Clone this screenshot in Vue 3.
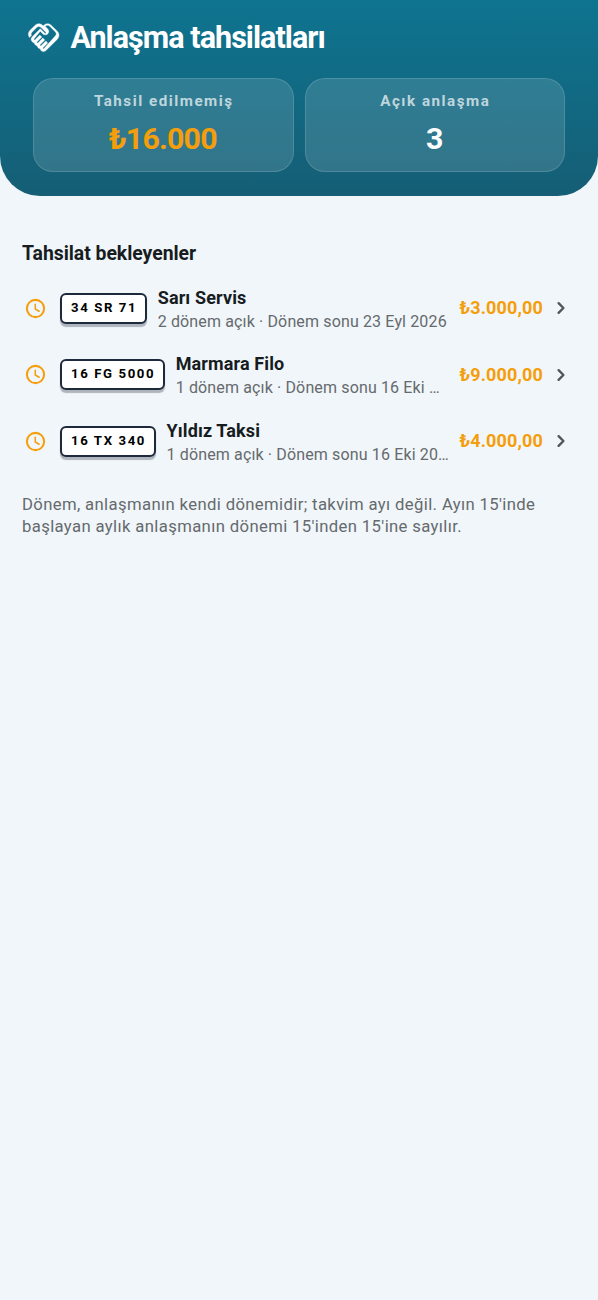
<script setup>
const stats = [
  { label: 'Tahsil edilmemiş', value: '₺16.000', accent: true },
  { label: 'Açık anlaşma', value: '3', accent: false },
]
const rows = [
  { plate: '34 SR 71', name: 'Sarı Servis', info: '2 dönem açık · Dönem sonu 23 Eyl 2026', amount: '₺3.000,00' },
  { plate: '16 FG 5000', name: 'Marmara Filo', info: '1 dönem açık · Dönem sonu 16 Eki …', amount: '₺9.000,00' },
  { plate: '16 TX 340', name: 'Yıldız Taksi', info: '1 dönem açık · Dönem sonu 16 Eki 20…', amount: '₺4.000,00' },
]
</script>

<template>
  <div class="page">
    <header class="hero">
      <div class="heading">
        <svg class="shake" viewBox="0 0 24 24" fill="currentColor" stroke="currentColor" stroke-width="0.25">
          <path d="M12.22 19.85c-.18.18-.5.21-.71 0-.18-.18-.21-.5 0-.71l3.39-3.39-1.41-1.41-3.39 3.39c-.19.2-.51.19-.71 0-.21-.21-.18-.53 0-.71l3.39-3.39-1.41-1.41-3.39 3.39c-.18.18-.5.21-.71 0-.19-.19-.19-.51 0-.71l3.39-3.39-1.42-1.41-3.39 3.39c-.18.18-.5.21-.71 0-.19-.2-.19-.51 0-.71L9.52 7.4l1.87 1.86c.95.95 2.59.94 3.54 0 .98-.98.98-2.56 0-3.54l-1.86-1.86.28-.28c.78-.78 2.05-.78 2.83 0l4.24 4.24c.78.78.78 2.05 0 2.83L12.22 19.85zM21.83 13.07c1.56-1.56 1.56-4.09 0-5.66l-4.24-4.24c-1.56-1.56-4.09-1.56-5.66 0l-.28.28-.28-.28c-1.56-1.56-4.09-1.56-5.66 0L2.17 6.71c-1.42 1.42-1.55 3.63-.4 5.19l1.45-1.45c-.39-.75-.26-1.7.37-2.33l3.54-3.54c.78-.78 2.05-.78 2.83 0l3.56 3.56c.18.18.21.5 0 .71-.21.21-.53.18-.71 0L9.52 5.57l-5.8 5.79c-.98.97-.98 2.56 0 3.54.39.39.89.63 1.42.7.07.52.3 1.02.7 1.42.4.4.9.63 1.42.7.07.52.3 1.02.7 1.42.4.4.9.63 1.42.7.07.54.31 1.03.7 1.42.47.47 1.1.73 1.77.73.67 0 1.3-.26 1.77-.73L21.83 13.07z" />
        </svg>
        <h1>Anlaşma tahsilatları</h1>
      </div>
      <div class="stats">
        <div v-for="s in stats" :key="s.label" class="stat">
          <span class="label">{{ s.label }}</span>
          <span class="value" :class="{ accent: s.accent }">{{ s.value }}</span>
        </div>
      </div>
    </header>

    <main>
      <h2>Tahsilat bekleyenler</h2>
      <div v-for="r in rows" :key="r.plate" class="row">
        <svg class="clock" viewBox="0 0 24 24" fill="none" stroke="currentColor">
          <circle cx="12" cy="12" r="9" stroke-width="2.1" />
          <path d="M11.75 7.6v4.9l4 2.4" stroke-width="1.6" stroke-linecap="round" stroke-linejoin="round" />
        </svg>
        <span class="plate">{{ r.plate }}</span>
        <div class="text">
          <div class="name">{{ r.name }}</div>
          <div class="info">{{ r.info }}</div>
        </div>
        <span class="amount">{{ r.amount }}</span>
        <svg class="chevron" viewBox="0 0 24 24" fill="none" stroke="currentColor">
          <path d="M9.6 7.2l4.8 4.8-4.8 4.8" stroke-width="2.4" stroke-linecap="round" stroke-linejoin="round" />
        </svg>
      </div>
      <p class="note">Dönem, anlaşmanın kendi dönemidir; takvim ayı değil. Ayın 15'inde başlayan aylık anlaşmanın dönemi 15'inden 15'ine sayılır.</p>
    </main>
  </div>
</template>

<style>
body { background: #f1f6fa; }
</style>

<style scoped>
.page {
  min-height: 1300px;
  box-sizing: border-box;
  background: #f1f6fa;
  font-family: Roboto, "Noto Sans", sans-serif;
  color: #171c1f;
}
.hero {
  height: 196px;
  box-sizing: border-box;
  padding: 17px 33px 0;
  border-radius: 0 0 40px 40px;
  background: linear-gradient(180deg, #0e7490, #155e75);
  color: #fff;
}
.heading {
  display: flex;
  align-items: center;
  gap: 10px;
  height: 41px;
  margin-left: -6px;
}
.shake { width: 33.4px; height: 33.4px; flex: none; }
h1 {
  margin: 0;
  font-size: 30.5px;
  line-height: 41px;
  font-weight: 700;
  letter-spacing: -0.95px;
  white-space: nowrap;
}
.stats { display: flex; gap: 11px; margin-top: 20px; }
.stat {
  flex: 1;
  height: 93.5px;
  box-sizing: border-box;
  border: 1px solid rgba(255, 255, 255, 0.14);
  border-radius: 20px;
  background: rgba(255, 255, 255, 0.13);
  display: flex;
  flex-direction: column;
  align-items: center;
  padding-top: 12px;
}
.label {
  margin-left: 1px;
  font-size: 15.2px;
  line-height: 21px;
  font-weight: 700;
  letter-spacing: 1.5px;
  color: rgba(255, 255, 255, 0.7);
}
.value { margin: 6.5px 1px 0 0; font-size: 30.3px; line-height: 40px; font-weight: 700; letter-spacing: -0.8px; }
.value.accent { color: #f59e0b; }
main { padding: 46px 22px 0; }
h2 { margin: 0 0 9px; font-size: 19.4px; line-height: 24px; font-weight: 700; letter-spacing: -0.03px; }
.row { display: flex; align-items: center; height: 66.6px; padding: 0 2px; }
.clock { width: 23px; height: 23px; flex: none; color: #f59e0b; }
.plate {
  flex: none;
  height: 31px;
  box-sizing: border-box;
  margin: 0 10.5px 0 12.5px;
  padding: 0 8px 0 9.5px;
  border: 2px solid #1e293b;
  border-radius: 6px;
  background: #fff;
  box-shadow: 0 3px 1px rgba(30, 41, 59, 0.32);
  color: #000;
  font-size: 13.2px;
  line-height: 26.5px;
  font-weight: 700;
  letter-spacing: 1.6px;
  white-space: nowrap;
}
.text { flex: 1; min-width: 0; position: relative; top: 1px; }
.name { font-size: 18px; line-height: 24px; font-weight: 700; letter-spacing: 0.12px; }
.info {
  margin-right: -2px;
  font-size: 16px;
  line-height: 23px;
  letter-spacing: 0.14px;
  color: #656a6d;
  white-space: nowrap;
  overflow: hidden;
  text-overflow: ellipsis;
}
.amount { margin-left: 9.5px; font-size: 18px; line-height: 24px; font-weight: 700; color: #f59e0b; letter-spacing: 0.15px; }
.chevron { width: 24px; height: 24px; flex: none; margin: 0 1px 0 6px; color: #50565a; }
.note { margin: 19px 0 0; font-size: 16.7px; line-height: 22px; letter-spacing: 0.36px; color: #656a6d; }
</style>
